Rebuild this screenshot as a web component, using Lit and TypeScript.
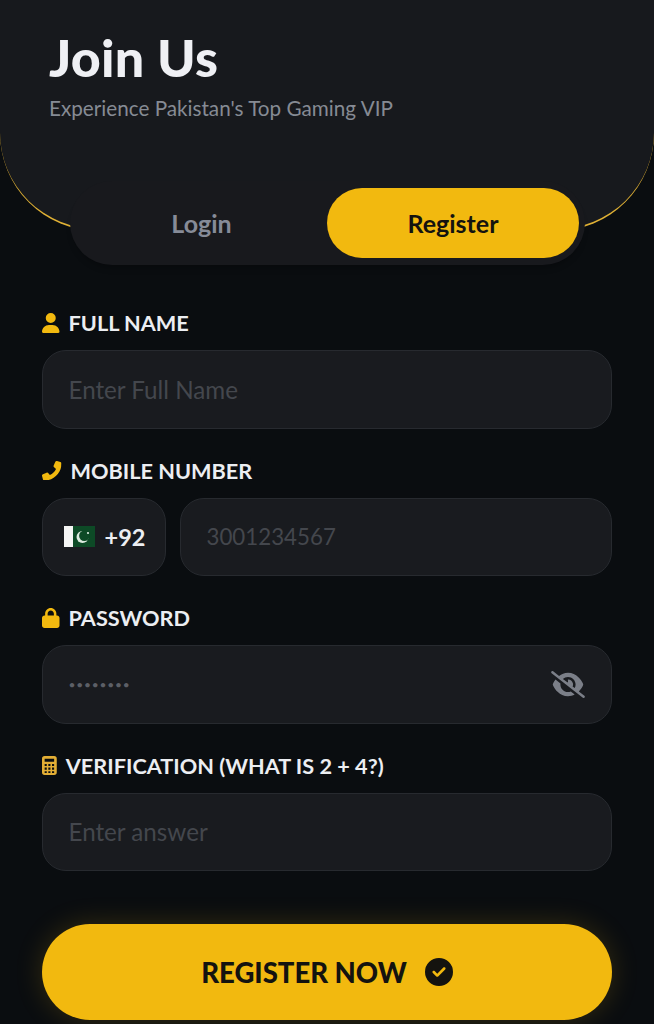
import { LitElement, html, css, svg } from "lit";
import { customElement } from "lit/decorators.js";

const USER = "M224 256A128 128 0 1 0 224 0a128 128 0 1 0 0 256zm-45.7 48C79.8 304 0 383.8 0 482.3C0 498.7 13.3 512 29.7 512H418.3c16.4 0 29.7-13.3 29.7-29.7C448 383.8 368.2 304 269.7 304H178.3z";
const PHONE = "M164.9 24.6c-7.7-18.6-28-28.5-47.4-23.2l-88 24C12.1 30.2 0 46 0 64C0 311.4 200.6 512 448 512c18 0 33.8-12.1 38.6-29.5l24-88c5.3-19.4-4.6-39.7-23.2-47.4l-96-40c-16.3-6.8-35.2-2.1-46.3 11.6L304.7 368C234.3 334.7 177.3 277.7 144 207.3L193.3 167c13.7-11.2 18.4-30 11.6-46.3l-40-96z";
const LOCK = "M144 144v48H304V144c0-44.2-35.8-80-80-80s-80 35.8-80 80zM80 192V144C80 64.5 144.5 0 224 0s144 64.5 144 144v48h16c35.3 0 64 28.7 64 64V448c0 35.3-28.7 64-64 64H64c-35.3 0-64-28.7-64-64V256c0-35.3 28.7-64 64-64H80z";
const EYE = "M38.8 5.1C28.4-3.1 13.3-1.2 5.1 9.2S-1.2 34.7 9.2 42.9l592 464c10.4 8.2 25.5 6.3 33.7-4.1s6.3-25.5-4.1-33.7L525.6 386.7c39.6-40.6 66.4-86.1 79.9-118.4c3.3-7.9 3.3-16.7 0-24.6c-14.9-35.7-46.2-87.7-93-131.1C465.5 68.8 400.8 32 320 32c-68.2 0-125 26.3-169.3 60.8L38.8 5.1zM223.1 149.5C248.6 126.2 282.7 112 320 112c79.5 0 144 64.5 144 144c0 24.9-6.3 48.3-17.4 68.7L408 294.5c8.4-19.3 10.6-41.4 4.8-63.3c-11.1-41.5-47.8-69.4-88.6-71.1c-5.8-.2-9.2 6.1-7.4 11.7c2.1 6.4 3.3 13.2 3.3 20.3c0 10.2-2.4 19.8-6.6 28.3l-90.3-70.8zM373 389.9c-16.4 6.5-34.3 10.1-53 10.1c-79.5 0-144-64.5-144-144c0-6.9 .5-13.6 1.4-20.2L83.1 161.5C60.3 191.2 44 220.8 34.5 243.7c-3.3 7.9-3.3 16.7 0 24.6c14.9 35.7 46.2 87.7 93 131.1C174.5 443.2 239.2 480 320 480c47.8 0 89.9-12.9 126.2-32.5L373 389.9z";
const CHECK = "M256 512A256 256 0 1 0 256 0a256 256 0 1 0 0 512zM369 209L241 337c-9.4 9.4-24.6 9.4-33.9 0l-64-64c-9.4-9.4-9.4-24.6 0-33.9s24.6-9.4 33.9 0l47 47L335 175c9.4-9.4 24.6-9.4 33.9 0s9.4 24.6 0 33.9z";

@customElement("app-root")
export class AppRoot extends LitElement {
  static styles = css`
    :host {
      display: block;
      height: 1024px;
      overflow: hidden;
      background: #0a0d10;
      font-family: "Lato", "Noto Sans", sans-serif;
      color: #eceef2;
    }
    * { box-sizing: border-box; }
    .hero {
      height: 231px;
      background: #17191d;
      border-bottom: 2.5px solid #e0b135;
      border-radius: 0 0 98px 98px;
      padding: 27px 49px 0;
    }
    h1 {
      margin: 0;
      font-size: 52px;
      line-height: 60px;
      font-weight: 900;
      letter-spacing: 0.2px;
      color: #eff0f4;
    }
    .sub {
      margin: 7px 0 0;
      font-size: 20.7px;
      line-height: 28px;
      font-weight: 400;
      color: #868b94;
    }
    .tabs {
      display: grid;
      grid-template-columns: 251px 252px;
      width: 515px;
      height: 84px;
      margin: -50px 0 0 70px;
      padding: 7px 6px;
      background: #18191d;
      border-radius: 42px;
      box-shadow: 0 6px 6px -3px rgba(0, 0, 0, 0.25);
      position: relative;
    }
    .tab {
      display: flex;
      align-items: center;
      justify-content: center;
      border-radius: 36px;
      font-size: 25px;
      font-weight: 700;
      color: #868b98;
    }
    .tab.on {
      background: #f2b90f;
      color: #14130f;
    }
    form {
      display: flex;
      flex-direction: column;
      gap: 30px;
      padding: 46px 42px 0;
    }
    label {
      display: flex;
      align-items: center;
      gap: 9px;
      height: 24px;
      margin-bottom: 15px;
      font-size: 21.7px;
      font-weight: 700;
      color: #eceef2;
      white-space: nowrap;
    }
    label svg { height: 20px; width: auto; fill: #f2b90f; flex: none; }
    label svg.phone { height: 19.5px; transform: scaleX(-1); }
    label svg.calc { height: 19px; fill: #e3ae35; }
    .box {
      display: flex;
      align-items: center;
      height: 78.5px;
      background: #191b1f;
      border: 1px solid #272a2f;
      border-radius: 24px;
      padding: 0 25.5px;
    }
    input {
      flex: 1;
      min-width: 0;
      width: 100%;
      border: 0;
      outline: 0;
      padding: 0;
      background: transparent;
      font: inherit;
      font-size: 24.2px;
      color: #44474d;
    }
    input::placeholder { color: #44474d; opacity: 1; }
    input.num { font-size: 22.3px; }
    input.pw { font-size: 12px; letter-spacing: 0.8px; color: #5c5f66; }
    .row { display: flex; gap: 14px; }
    .cc {
      flex: none;
      width: 124px;
      gap: 10px;
      padding: 0 0 0 20.5px;
      font-size: 23.5px;
      font-weight: 700;
      color: #eceef2;
    }
    .row .grow { flex: 1; }
    .flag { width: 31px; height: 21px; flex: none; display: block; }
    .eye { width: 34px; height: 27px; fill: #7b7f88; flex: none; margin-right: 1px; }
    .submit {
      display: flex;
      align-items: center;
      justify-content: center;
      gap: 18px;
      width: 100%;
      height: 96px;
      margin-top: 23px;
      border: 0;
      padding: 0;
      border-radius: 48px;
      background: #f2b90f;
      color: #14130f;
      font: inherit;
      font-size: 27.5px;
      font-weight: 900;
      box-shadow: 0 0 28px rgba(242, 185, 15, 0.18);
    }
    .submit svg { width: 28px; height: 28px; fill: #14130f; }
  `;

  private icon(d: string, vb: string, cls = "") {
    return html`<svg class=${cls} viewBox=${vb}>${svg`<path d=${d}></path>`}</svg>`;
  }

  render() {
    return html`
      <section class="hero">
        <h1>Join Us</h1>
        <p class="sub">Experience Pakistan's Top Gaming VIP</p>
      </section>
      <div class="tabs">
        <div class="tab">Login</div>
        <div class="tab on">Register</div>
      </div>
      <form>
        <div>
          <label>${this.icon(USER, "0 0 448 512")}FULL NAME</label>
          <div class="box"><input placeholder="Enter Full Name" /></div>
        </div>
        <div>
          <label>${this.icon(PHONE, "0 0 512 512", "phone")}MOBILE NUMBER</label>
          <div class="row">
            <div class="box cc">
              <svg class="flag" viewBox="0 0 31 21">
                <rect width="31" height="21" fill="#0d4a26"></rect>
                <rect width="9" height="21" fill="#f4f5f4"></rect>
                <circle cx="18.5" cy="11" r="6" fill="#dcebdf"></circle>
                <circle cx="20.3" cy="9.8" r="5.2" fill="#0d4a26"></circle>
                <circle cx="24" cy="7" r="1.1" fill="#dcebdf"></circle>
              </svg>
              +92
            </div>
            <div class="box grow"><input class="num" placeholder="3001234567" /></div>
          </div>
        </div>
        <div>
          <label>${this.icon(LOCK, "0 0 448 512")}PASSWORD</label>
          <div class="box">
            <input class="pw" type="password" .value=${"12345678"} />
            ${this.icon(EYE, "0 0 640 512", "eye")}
          </div>
        </div>
        <div>
          <label>
            <svg class="calc" viewBox="0 0 14 18">
              <path fill-rule="evenodd" d="M2.5 0h9A2.5 2.5 0 0 1 14 2.5v13a2.5 2.5 0 0 1-2.5 2.5h-9A2.5 2.5 0 0 1 0 15.5v-13A2.5 2.5 0 0 1 2.5 0zM2.5 2.5v3h9v-3zM2.5 7.5v2h2v-2zM6 7.5v2h2v-2zM9.5 7.5v2h2v-2zM2.5 11v2h2v-2zM6 11v2h2v-2zM9.5 11v2h2v-2zM2.5 14.5v1.500h2v-1.500zM6 14.5v1.500h2v-1.500zM9.5 14.5v1.500h2v-1.500z"></path>
            </svg>VERIFICATION (WHAT IS 2 + 4?)
          </label>
          <div class="box"><input placeholder="Enter answer" /></div>
        </div>
        <button class="submit" type="button">
          REGISTER NOW ${this.icon(CHECK, "0 0 512 512")}
        </button>
      </form>
    `;
  }
}
